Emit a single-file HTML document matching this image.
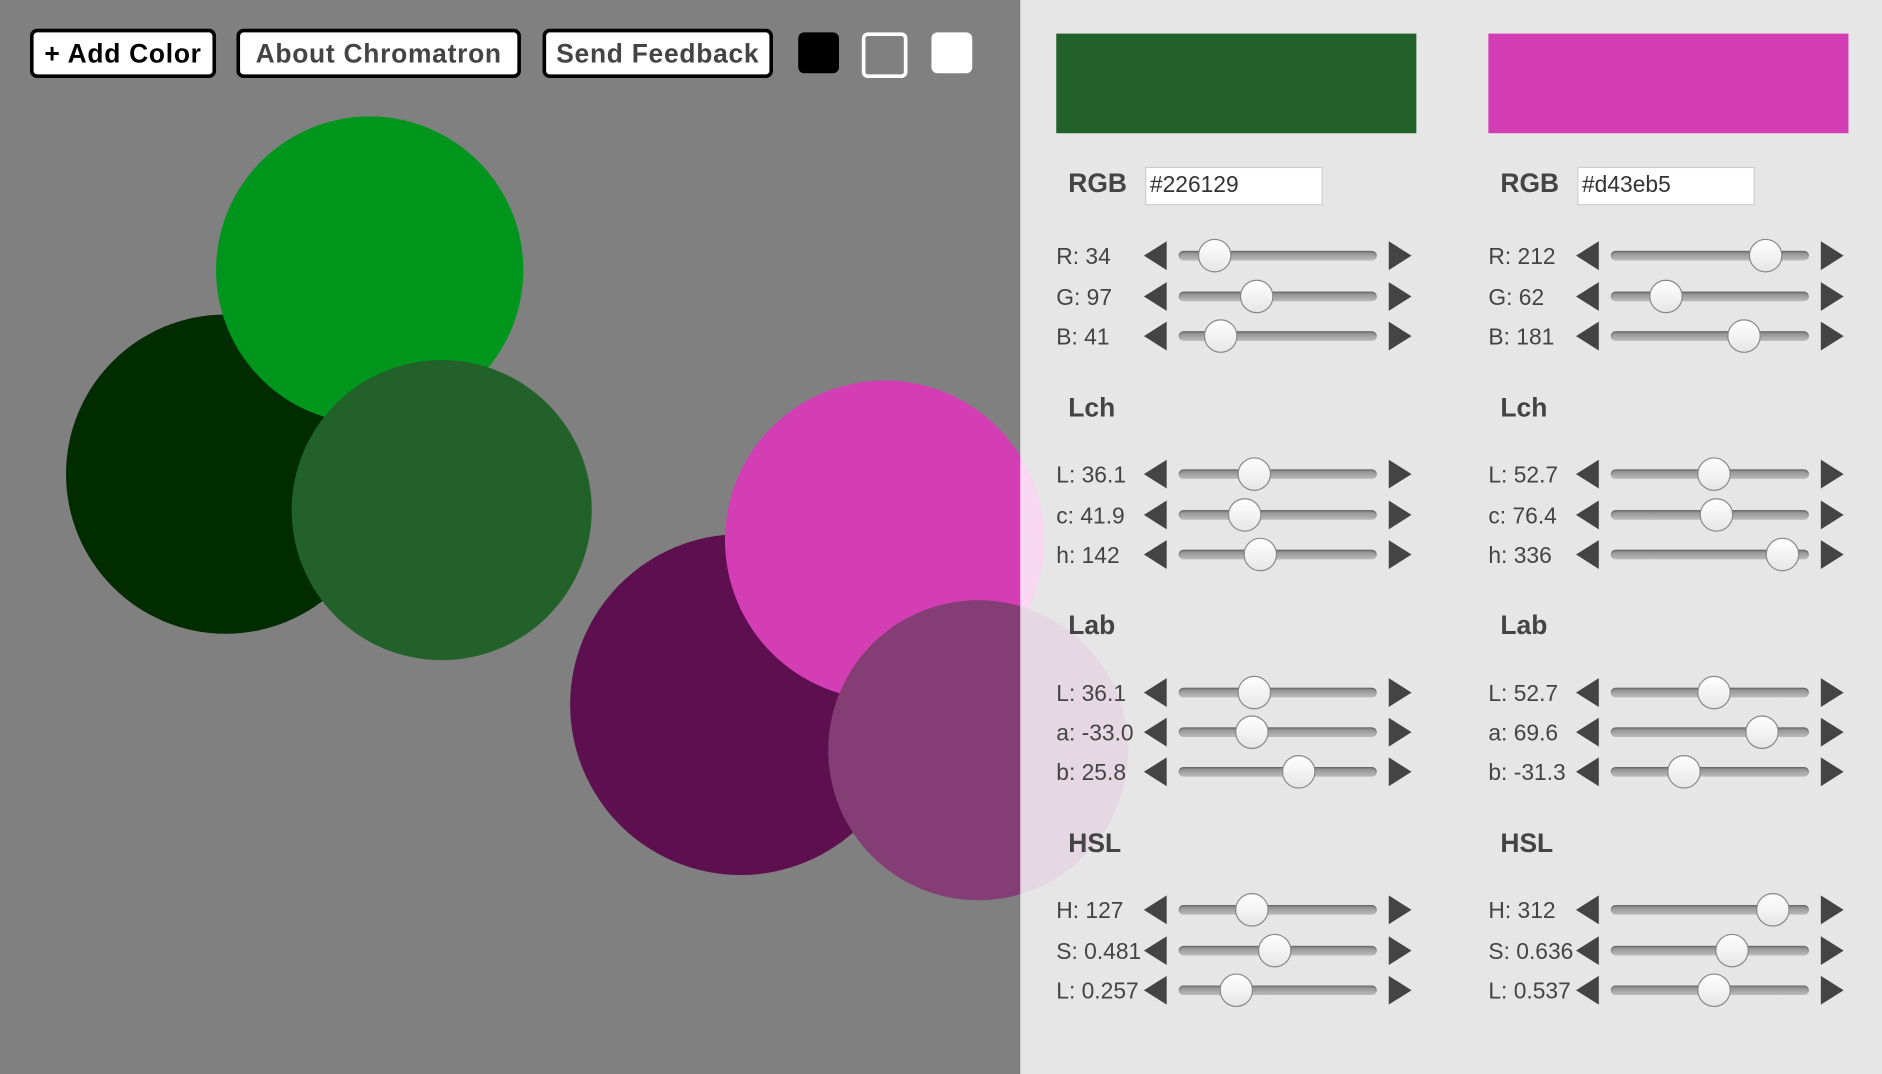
<!DOCTYPE html>
<html><head><meta charset="utf-8"><style>
html,body{margin:0;padding:0;width:1882px;height:1074px;overflow:hidden;background:#808080}
#s{position:absolute;left:0;top:0;width:1568px;height:895px;transform:scale(1.2003);transform-origin:0 0;font-family:"Liberation Sans",sans-serif}
.c{position:absolute;border-radius:50%}
#panel{position:absolute;left:850px;top:0;width:718px;height:895px;background:rgba(255,255,255,0.8)}
.btn{position:absolute;top:24px;height:35px;border:3px solid #000;border-radius:6px;background:#fff;font-weight:bold;font-size:22px;line-height:35px;text-align:center;color:#444;letter-spacing:0.6px}
.sq{position:absolute;top:27px;width:34px;height:34px;border-radius:5px}
.col{position:absolute;top:0;width:300px;height:895px}
.sw{position:absolute;left:0;top:28px;width:300px;height:83px}
.h{position:absolute;left:10px;font-weight:bold;font-size:22px;color:#444;line-height:26px}
.inp{position:absolute;left:74px;top:139px;background:#fff;border:1px solid #ccc;font-size:19px;color:#333;line-height:30px;padding-left:3px;box-sizing:border-box;width:148px;height:32px}
.r{position:absolute;left:0;height:0;width:300px}
.r .l{position:absolute;left:0;top:-10px;font-size:19px;color:#444;line-height:24px;white-space:nowrap}
.r .tl{position:absolute;left:73px;top:-12px;width:0;height:0;border-top:12px solid transparent;border-bottom:12px solid transparent;border-right:19px solid #444}
.r .tr{position:absolute;left:277px;top:-12px;width:0;height:0;border-top:12px solid transparent;border-bottom:12px solid transparent;border-left:19px solid #444}
.r .tk{position:absolute;left:102px;top:-4px;width:165px;height:8px;border-radius:4px;background:linear-gradient(#888,#bbb);box-shadow:inset 0 1px 1px #666}
.r .th{position:absolute;top:-14px;width:26px;height:26px;border-radius:50%;border:1px solid #888;background:linear-gradient(#fff,#e6e6e6)}
</style></head><body><div id="s">
<div class="c" style="left:55px;top:262px;width:266px;height:266px;background:#002c00"></div>
<div class="c" style="left:180px;top:97px;width:256px;height:256px;background:#00961e"></div>
<div class="c" style="left:243px;top:300px;width:250px;height:250px;background:#226129"></div>
<div class="c" style="left:475px;top:445px;width:284px;height:284px;background:#5e0f4f"></div>
<div class="c" style="left:604px;top:317px;width:266px;height:266px;background:#d43eb5"></div>
<div class="c" style="left:690px;top:500px;width:250px;height:250px;background:#843e75"></div>
<div id="panel"></div>
<div class="btn" style="left:25px;width:149px;color:#000">+ Add Color</div>
<div class="btn" style="left:197px;width:231px">About Chromatron</div>
<div class="btn" style="left:452px;width:186px">Send Feedback</div>
<div class="sq" style="left:665px;background:#000"></div>
<div class="sq" style="left:718px;width:32px;height:32px;border:3px solid #fff;background:#808080"></div>
<div class="sq" style="left:776px;background:#fff"></div>

<div class="col" style="left:880px">
<div class="sw" style="background:#226129"></div>
<div class="h" style="top:140px">RGB</div><div class="inp">#226129</div>
<div class="r" style="top:213px"><span class="l">R: 34</span><i class="tl"></i><i class="tk"></i><i class="th" style="left:118px"></i><i class="tr"></i></div>
<div class="r" style="top:247px"><span class="l">G: 97</span><i class="tl"></i><i class="tk"></i><i class="th" style="left:153px"></i><i class="tr"></i></div>
<div class="r" style="top:280px"><span class="l">B: 41</span><i class="tl"></i><i class="tk"></i><i class="th" style="left:123px"></i><i class="tr"></i></div>
<div class="h" style="top:327px">Lch</div>
<div class="r" style="top:395px"><span class="l">L: 36.1</span><i class="tl"></i><i class="tk"></i><i class="th" style="left:151px"></i><i class="tr"></i></div>
<div class="r" style="top:429px"><span class="l">c: 41.9</span><i class="tl"></i><i class="tk"></i><i class="th" style="left:143px"></i><i class="tr"></i></div>
<div class="r" style="top:462px"><span class="l">h: 142</span><i class="tl"></i><i class="tk"></i><i class="th" style="left:156px"></i><i class="tr"></i></div>
<div class="h" style="top:508px">Lab</div>
<div class="r" style="top:577px"><span class="l">L: 36.1</span><i class="tl"></i><i class="tk"></i><i class="th" style="left:151px"></i><i class="tr"></i></div>
<div class="r" style="top:610px"><span class="l">a: -33.0</span><i class="tl"></i><i class="tk"></i><i class="th" style="left:149px"></i><i class="tr"></i></div>
<div class="r" style="top:643px"><span class="l">b: 25.8</span><i class="tl"></i><i class="tk"></i><i class="th" style="left:188px"></i><i class="tr"></i></div>
<div class="h" style="top:690px">HSL</div>
<div class="r" style="top:758px"><span class="l">H: 127</span><i class="tl"></i><i class="tk"></i><i class="th" style="left:149px"></i><i class="tr"></i></div>
<div class="r" style="top:792px"><span class="l">S: 0.481</span><i class="tl"></i><i class="tk"></i><i class="th" style="left:168px"></i><i class="tr"></i></div>
<div class="r" style="top:825px"><span class="l">L: 0.257</span><i class="tl"></i><i class="tk"></i><i class="th" style="left:136px"></i><i class="tr"></i></div>
</div>

<div class="col" style="left:1240px">
<div class="sw" style="background:#d43eb5"></div>
<div class="h" style="top:140px">RGB</div><div class="inp">#d43eb5</div>
<div class="r" style="top:213px"><span class="l">R: 212</span><i class="tl"></i><i class="tk"></i><i class="th" style="left:217px"></i><i class="tr"></i></div>
<div class="r" style="top:247px"><span class="l">G: 62</span><i class="tl"></i><i class="tk"></i><i class="th" style="left:134px"></i><i class="tr"></i></div>
<div class="r" style="top:280px"><span class="l">B: 181</span><i class="tl"></i><i class="tk"></i><i class="th" style="left:199px"></i><i class="tr"></i></div>
<div class="h" style="top:327px">Lch</div>
<div class="r" style="top:395px"><span class="l">L: 52.7</span><i class="tl"></i><i class="tk"></i><i class="th" style="left:174px"></i><i class="tr"></i></div>
<div class="r" style="top:429px"><span class="l">c: 76.4</span><i class="tl"></i><i class="tk"></i><i class="th" style="left:176px"></i><i class="tr"></i></div>
<div class="r" style="top:462px"><span class="l">h: 336</span><i class="tl"></i><i class="tk"></i><i class="th" style="left:231px"></i><i class="tr"></i></div>
<div class="h" style="top:508px">Lab</div>
<div class="r" style="top:577px"><span class="l">L: 52.7</span><i class="tl"></i><i class="tk"></i><i class="th" style="left:174px"></i><i class="tr"></i></div>
<div class="r" style="top:610px"><span class="l">a: 69.6</span><i class="tl"></i><i class="tk"></i><i class="th" style="left:214px"></i><i class="tr"></i></div>
<div class="r" style="top:643px"><span class="l">b: -31.3</span><i class="tl"></i><i class="tk"></i><i class="th" style="left:149px"></i><i class="tr"></i></div>
<div class="h" style="top:690px">HSL</div>
<div class="r" style="top:758px"><span class="l">H: 312</span><i class="tl"></i><i class="tk"></i><i class="th" style="left:223px"></i><i class="tr"></i></div>
<div class="r" style="top:792px"><span class="l">S: 0.636</span><i class="tl"></i><i class="tk"></i><i class="th" style="left:189px"></i><i class="tr"></i></div>
<div class="r" style="top:825px"><span class="l">L: 0.537</span><i class="tl"></i><i class="tk"></i><i class="th" style="left:174px"></i><i class="tr"></i></div>
</div>
</div></body></html>
